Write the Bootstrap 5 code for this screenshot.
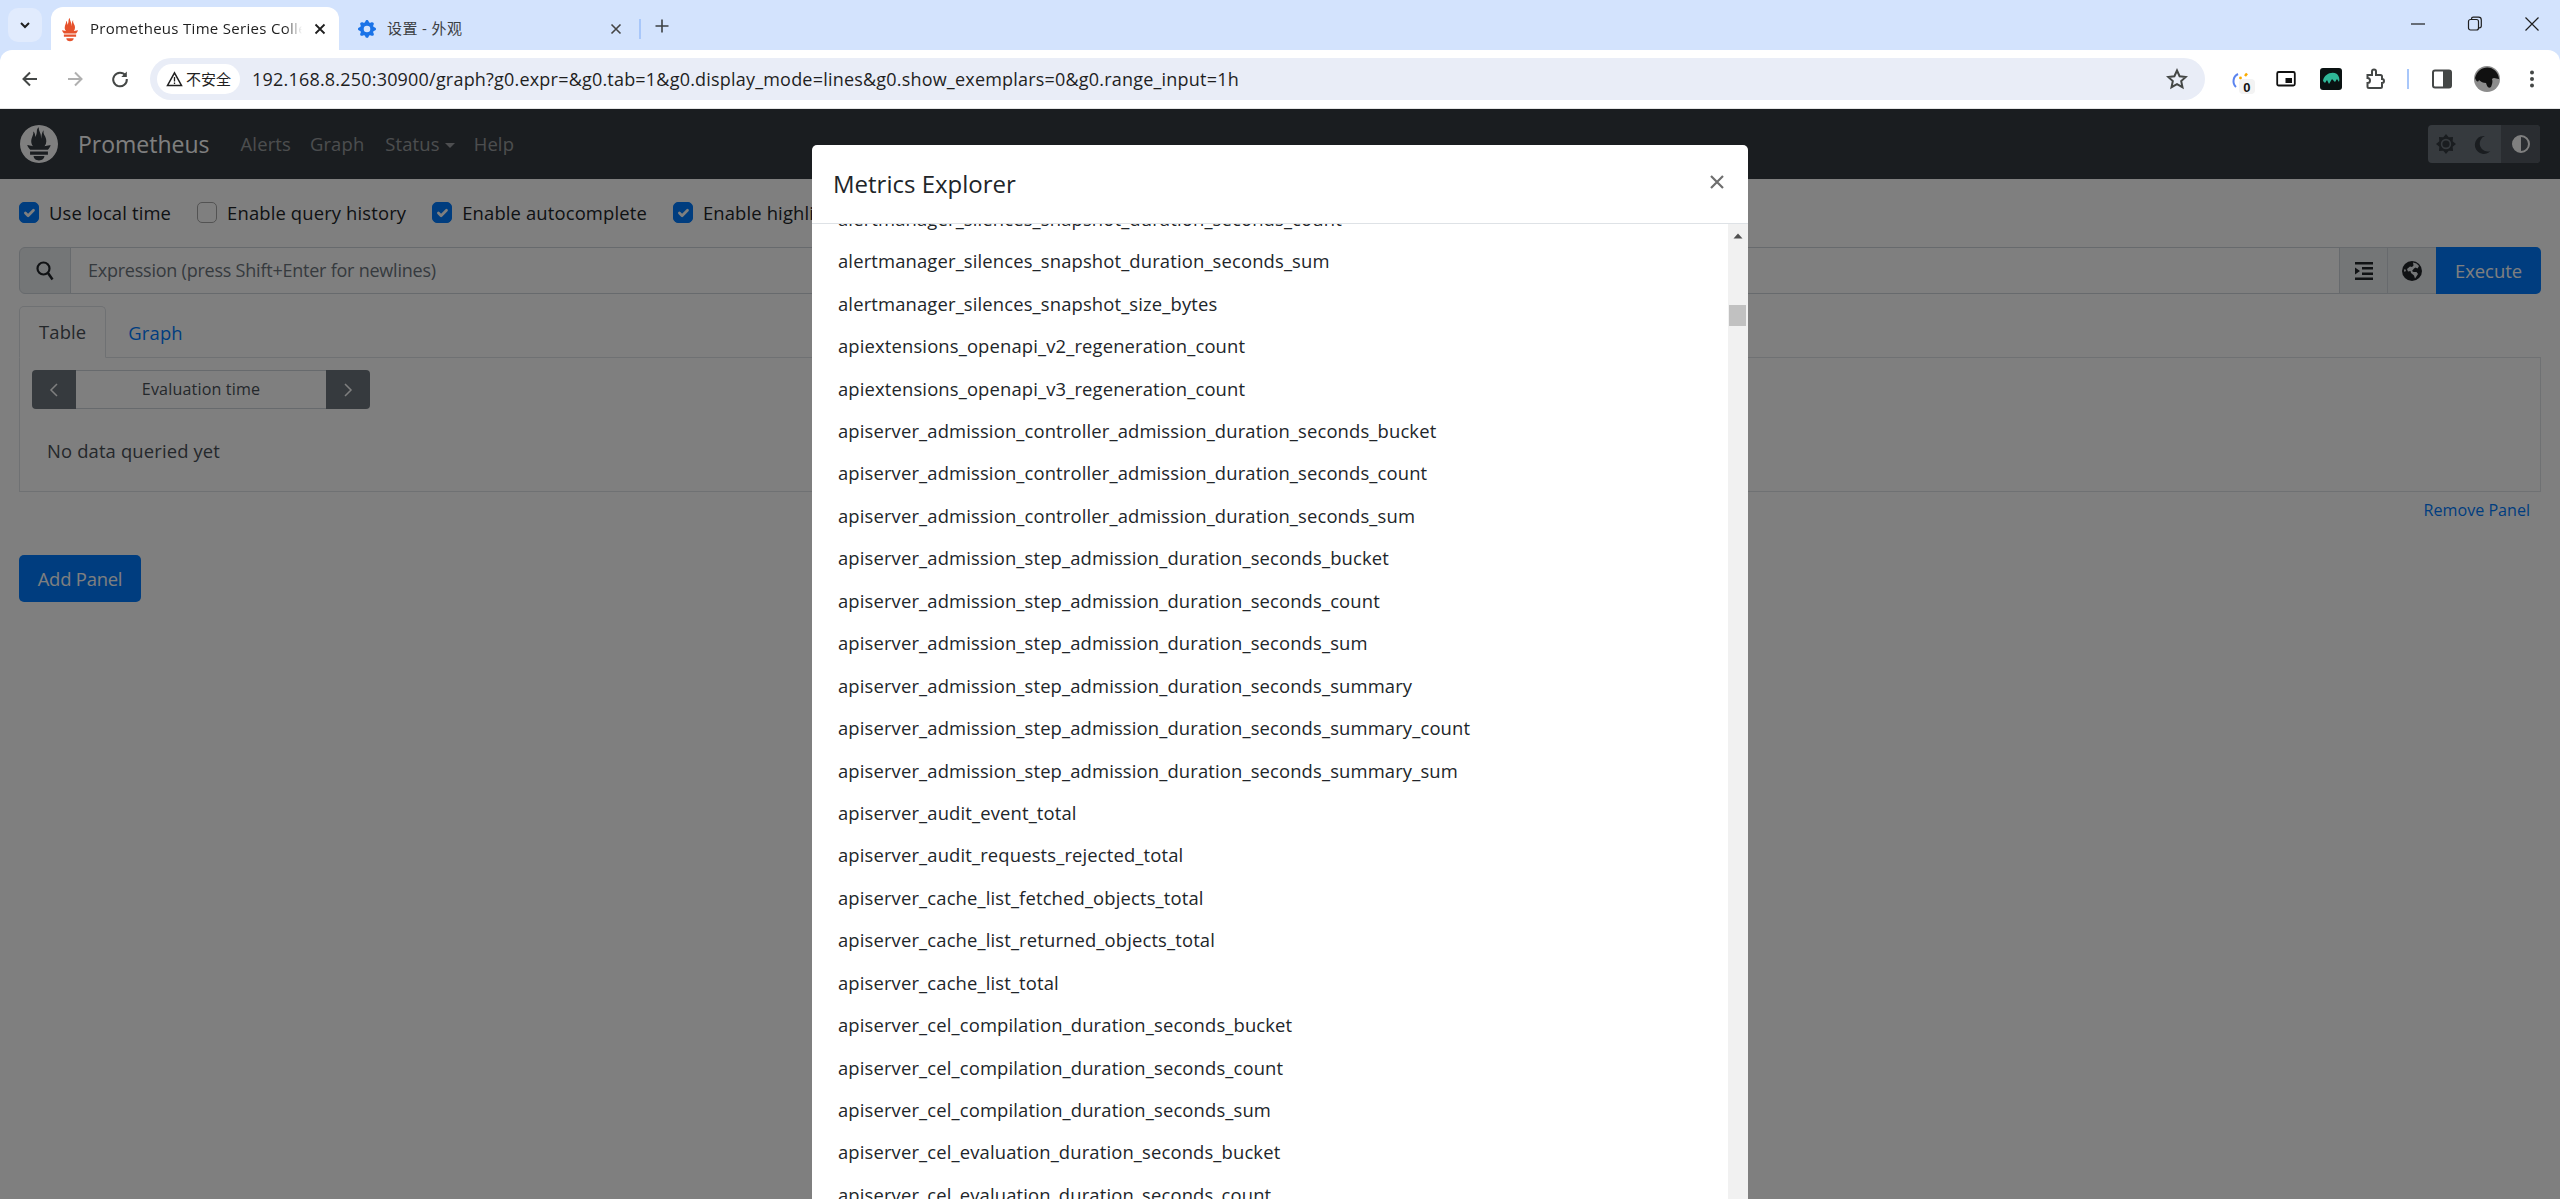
<!DOCTYPE html>
<html lang="en"><head><meta charset="utf-8"><title>Prometheus Time Series Collection and Processing Server</title>
<link rel="stylesheet" href="https://cdn.jsdelivr.net/npm/bootstrap@5.3.0/dist/css/bootstrap.min.css">
<style>
html,body{height:1199px;overflow:hidden}
body{font-family:"Open Sans","Noto Sans",sans-serif;color:#212529;font-size:18.4px;letter-spacing:.15px;background:#fff}
.cjk{font-family:"Open Sans","Noto Sans CJK SC",sans-serif}
.tabstrip{height:50px;background:#d3e3fd;flex:none}
.drop-tab{width:34px;height:34px;margin:8px 9px 0 8px;background:#e1ebfd;border-radius:10px;align-self:flex-start}
.tab-on{width:288px;height:43px;background:#fff;border-radius:12px 12px 0 0;padding:0 13px 0 9px;font-size:15px;letter-spacing:.3px;color:#1f1f1f}
.tab-off{width:300px;height:43px;padding:0 17px 0 19px;font-size:15px;color:#3c4043}
.tab-text{width:212px;white-space:nowrap;overflow:hidden;margin-left:10px;-webkit-mask-image:linear-gradient(90deg,#000 92%,transparent)}
.tabsep{width:2px;height:20px;background:#a8c7fa;margin:0 0 11px 0}
.plusbtn{margin:0 0 11px 13px}
.winbtns{gap:39px;padding-right:19px;align-self:flex-start;height:48px}
.toolbar{height:58px;background:#fff;border-radius:12px 12px 0 0;flex:none;padding:0 20px}
.toolwrap{background:#d3e3fd;flex:none}
.navbtns{gap:25px;width:130px;flex:none}
.omni{width:2055px;height:42px;background:#e9edf7;border-radius:21px;padding:0 17px 0 7px;color:#1f1f1f;flex:none}
.chip{width:83px;height:30px;background:#fff;border-radius:15px;font-size:15px;gap:3px;margin-right:12px;flex:none;justify-content:center}
.urltext{font-size:18px;letter-spacing:.2px;white-space:nowrap}
.exts{margin-left:13px;flex:none}
.ext{width:45px;display:flex;justify-content:center;position:relative}
.page-area{flex:1;min-height:0;border-top:1px solid #e4e4e4}
.pnav{height:70px;background:#343a40;padding:0 20px;flex:none}
.pbrand{font-size:23px;color:#fff;margin-left:20px;margin-right:31px;letter-spacing:0}
.plink{color:rgba(255,255,255,.5);margin-right:21px;text-decoration:none}
.plink.tight{margin-right:19px}
.caret{display:inline-block;border-top:.3em solid;border-left:.3em solid transparent;border-right:.3em solid transparent;margin-left:5px;vertical-align:.2em}
.themegrp{width:112px;height:38px;background:#6c757d;border-radius:4px;overflow:hidden}
.themegrp span{flex:1;display:flex;align-items:center;justify-content:center}
.themegrp .on{background:#545b62;flex:0 0 39px}
.pmain{padding:0 19px}
.optrow{margin-top:22px;height:24px;line-height:24px}
.optrow .form-check{padding-left:30px;margin:0 26px 0 0;min-height:0}
.optrow .form-check-input{width:20px;height:21px;margin:1px 0 0 -30px;border-radius:5px;border-color:#a6a6a6;float:left}
.form-check-input:checked{background-color:#007bff;border-color:#007bff}
.expr{margin-top:22px;height:47px;flex-wrap:nowrap}
.expr .input-group-text{background:#e9ecef;border-color:#ced4da;padding:0;justify-content:center}
.expr .form-control{border-color:#ced4da;border-radius:0;padding-left:17px;font-size:18px;letter-spacing:-.23px}
.expr .form-control::placeholder{color:#6c757d}
.btn-run{background:#007bff;color:#fff;border:0;width:105px;border-radius:0 5px 5px 0;font-size:18.4px;letter-spacing:0}
.ptabs{margin-top:12px;height:51px}
.ptabs .nav-link{height:52px;padding:0 19px;line-height:52px;color:#007bff;border-radius:5px 5px 0 0}
.ptabs .nav-link.active{color:#495057;background:#fff;border-color:#dee2e6 #dee2e6 #fff;line-height:50px}
.ptabs .nav-item+.nav-item .nav-link{padding:0 21px}
.pbody{height:135px;border:1px solid #dee2e6;padding:12px}
.evalgrp{width:338px;height:39px}
.evalbtn{width:44px;background:#6c757d;display:flex;align-items:center;justify-content:center;flex:none}
.evalbtn.l{border-radius:4px 0 0 4px}.evalbtn.r{border-radius:0 4px 4px 0}
.evalmid{flex:1;border-top:1px solid #ced4da;border-bottom:1px solid #ced4da;font-size:16.1px;color:#495057;text-align:center;line-height:37px}
.nodata{margin:30px 0 0 15px;color:#495057;line-height:24px}
.rmv{font-size:16.1px;letter-spacing:0;color:#007bff;text-decoration:none;margin:8px 11px 0 0;line-height:21px;display:block;text-align:right}
.addbtn{margin-top:34px;width:122px;height:47px;background:#007bff;border:0;border-radius:5px;color:#fff;font-size:18.4px;letter-spacing:-.2px;padding:0;display:block}
.dimmer{background:rgba(0,0,0,.5);inset:0;z-index:5}
.mshell{z-index:6;left:812px;top:36px;width:936px;height:1200px;border-radius:5px 5px 0 0;background:#fff;overflow:hidden}
.mhead{height:79px;border-bottom:1px solid #dee2e6;padding:0 24px 0 21px;flex:none}
.mtitle{font-size:24px;font-weight:400;letter-spacing:0;margin:0;color:#212529;line-height:36px}
.mbody{min-height:0;flex:1}
.mlist{flex:1;overflow:hidden}
.mlist .list-group{margin-top:-26.9px}
.mlist .list-group-item{border:0;padding:7.725px 0 7.725px 26px;line-height:27px;font-size:18.4px;color:#212529;background:transparent}
.sbar{width:20px;background:#f1f1f1;flex:none}
.sarrow{height:20px;display:flex;align-items:center;justify-content:center;padding-top:3px}
.sthumb{height:21px;background:#c1c1c1;margin:61px 2px 0 1px}
</style></head>
<body class="d-flex flex-column">

<div class="tabstrip d-flex align-items-end">
  <div class="drop-tab d-flex align-items-center justify-content-center">
    <svg width="12" height="12" viewBox="0 0 12 12"><path d="M2 4l4 4 4-4" fill="none" stroke="#1f1f1f" stroke-width="2"/></svg>
  </div>
  <div class="tab-on d-flex align-items-center">
    <svg width="20" height="26" viewBox="3 0 18 24"><path fill="#e6522c" d="M12 23.4c-1.885 0-3.414-1.26-3.414-2.814h6.828c0 1.553-1.528 2.813-3.414 2.813zM17.64 19.2H6.36v-2.046h11.28v2.046zM17.6 16.1H6.391c-.037-.043-.075-.086-.111-.13-1.155-1.401-1.427-2.133-1.69-2.879-.005-.025 1.4.287 2.395.511 0 0 .513.119 1.262.255-.72-.843-1.147-1.915-1.147-3.01 0-2.406 1.845-4.508 1.18-6.207.648.053 1.34 1.367 1.387 3.422.689-.951.977-2.69.977-3.755 0-1.103.727-2.385 1.454-2.429-.648 1.069.168 1.984.894 4.256.272.854.237 2.29.447 3.201.07-1.892.395-4.652 1.595-5.605-.529 1.2.079 2.702.494 3.424.671 1.164 1.078 2.047 1.078 3.716a4.642 4.642 0 01-1.11 2.996c.792-.149 1.34-.283 1.34-.283l2.573-.502s-.374 1.538-1.81 3.019z"/></svg>
    <span class="tab-text">Prometheus Time Series Collection and Processing Server</span>
    <svg class="ms-auto" width="12" height="12" viewBox="0 0 12 12"><path d="M1.5 1.5l9 9M10.500 1.5l-9 9" stroke="#1f1f1f" stroke-width="1.8"/></svg>
  </div>
  <div class="tab-off d-flex align-items-center">
    <svg width="18" height="18" viewBox="0 0 16 16"><path fill="#1a73e8" d="M9.405 1.05c-.413-1.4-2.397-1.4-2.81 0l-.1.34a1.464 1.464 0 0 1-2.105.872l-.31-.17c-1.283-.698-2.686.705-1.987 1.987l.169.311c.446.82.023 1.841-.872 2.105l-.34.1c-1.4.413-1.4 2.397 0 2.81l.34.1a1.464 1.464 0 0 1 .872 2.105l-.17.31c-.698 1.283.705 2.686 1.987 1.987l.311-.169a1.464 1.464 0 0 1 2.105.872l.1.34c.413 1.4 2.397 1.4 2.81 0l.1-.34a1.464 1.464 0 0 1 2.105-.872l.31.17c1.283.698 2.686-.705 1.987-1.987l-.169-.311a1.464 1.464 0 0 1 .872-2.105l.34-.1c1.4-.413 1.4-2.397 0-2.81l-.34-.1a1.464 1.464 0 0 1-.872-2.105l.17-.31c.698-1.283-.705-2.686-1.987-1.987l-.311.169a1.464 1.464 0 0 1-2.105-.872l-.1-.34zM8 10.93a2.929 2.929 0 1 1 0-5.86 2.929 2.929 0 0 1 0 5.858z"/></svg>
    <span class="cjk" style="letter-spacing:.4px;margin-left:11px">设置 - 外观</span>
    <svg class="ms-auto" width="12" height="12" viewBox="0 0 12 12"><path d="M1.5 1.5l9 9M10.500 1.5l-9 9" stroke="#444" stroke-width="1.6"/></svg>
  </div>
  <div class="tabsep"></div>
  <svg class="plusbtn" width="16" height="26" viewBox="0 0 16 16"><path d="M8 1.5v13M1.5 8h13" stroke="#3c4043" stroke-width="1.6"/></svg>
  <div class="winbtns d-flex align-items-center ms-auto">
    <svg width="18" height="18" viewBox="0 0 18 18"><path d="M2 9h14" stroke="#1f1f1f" stroke-width="1.2"/></svg>
    <svg width="18" height="18" viewBox="0 0 18 18"><rect x="2.500" y="4.500" width="10" height="10.500" rx="2" fill="none" stroke="#1f1f1f" stroke-width="1.2"/><path d="M5.500 4.500V4a1.800 1.800 0 0 1 1.800-1.800h5.200A2.800 2.800 0 0 1 15.300 5v6a1.800 1.800 0 0 1-1.800 1.800h-1" fill="none" stroke="#1f1f1f" stroke-width="1.2"/></svg>
    <svg width="18" height="18" viewBox="0 0 18 18"><path d="M2.500 2.500l13 13M15.500 2.500l-13 13" stroke="#1f1f1f" stroke-width="1.2"/></svg>
  </div>
</div>

<div class="toolwrap">
<div class="toolbar d-flex align-items-center">
  <div class="navbtns d-flex align-items-center">
    <svg width="20" height="20" viewBox="0 0 20 20"><path d="M17 10H4M10 3.500L3.500 10l6.500 6.500" fill="none" stroke="#444746" stroke-width="2"/></svg>
    <svg width="20" height="20" viewBox="0 0 20 20"><path d="M3 10h13M10 3.500l6.500 6.500-6.500 6.500" fill="none" stroke="#b0b0b0" stroke-width="2"/></svg>
    <svg width="20" height="20" viewBox="0 0 20 20"><path d="M15.500 6.500A6.800 6.800 0 1 0 16.800 10" fill="none" stroke="#444746" stroke-width="2"/><path d="M16.800 2.500v5.500h-5.500z" fill="#444746"/></svg>
  </div>
  <div class="omni d-flex align-items-center">
    <div class="chip d-flex align-items-center cjk">
      <svg width="17" height="16" viewBox="0 0 17 16"><path d="M8.500 1.800L15.500 14.500H1.500z" fill="none" stroke="#1f1f1f" stroke-width="1.500"/><path d="M8.500 6v4.500M8.500 11.500v1.500" stroke="#1f1f1f" stroke-width="1.300"/></svg>
      <span style="letter-spacing:0">不安全</span>
    </div>
    <span class="urltext">192.168.8.250:30900/graph?g0.expr=&amp;g0.tab=1&amp;g0.display_mode=lines&amp;g0.show_exemplars=0&amp;g0.range_input=1h</span>
    <svg class="ms-auto" width="22" height="22" viewBox="0 0 22 22"><path d="M11 2.500l2.600 5.700 6.200.7-4.600 4.200 1.300 6.100-5.500-3.100-5.500 3.100 1.300-6.100L2.200 8.900l6.200-.7z" fill="none" stroke="#444746" stroke-width="2"/></svg>
  </div>
  <div class="exts d-flex align-items-center">
    <span class="ext"><svg width="30" height="30" viewBox="0 0 30 30"><path d="M10 23a8 8 0 0 1 2-13" fill="none" stroke="#5b84ef" stroke-width="2"/><path d="M19 12l2-2.500" stroke="#f9ab00" stroke-width="2.500"/><circle cx="14.500" cy="14" r="1.400" fill="#f9ab00"/><rect x="13" y="15" width="16" height="15" rx="4" fill="#f3f3f3"/><text x="21" y="28" font-size="13" font-weight="700" text-anchor="middle" fill="#111" font-family="Liberation Sans">0</text></svg></span>
    <span class="ext"><svg width="20" height="18" viewBox="0 0 20 18"><rect x="1.200" y="2" width="17.600" height="13.500" rx="1.500" fill="none" stroke="#111" stroke-width="1.800"/><rect x="9.500" y="8" width="6.500" height="5" fill="#111"/></svg></span>
    <span class="ext"><svg width="22" height="22" viewBox="0 0 22 22"><rect width="22" height="22" rx="3" fill="#0a1212"/><path d="M3 13C4 6 12 3 17 6c2 2 3 5 2 8l-2-3-2 3-3-3-3 5-2-4-2 3z" fill="#2fb898"/></svg></span>
    <span class="ext"><svg width="22" height="22" viewBox="0 0 22 22"><path d="M2.500 7h4.500V3.500a2 2 0 0 1 4 0V7h4.500a1.500 1.500 0 0 1 1.500 1.500V11a2 2 0 0 1 0 4v3.500a1.500 1.500 0 0 1-1.500 1.500H4a1.500 1.500 0 0 1-1.500-1.500V15a2.500 2.500 0 0 0 0-5z" fill="none" stroke="#444746" stroke-width="2"/></svg></span>
    <span class="tabsep" style="margin:0 10px 0 9px;height:20px"></span>
    <span class="ext"><svg width="20" height="20" viewBox="0 0 20 20"><rect x="1" y="1.500" width="18" height="17" rx="2" fill="none" stroke="#444746" stroke-width="2"/><rect x="11" y="1.500" width="8" height="17" fill="#444746"/></svg></span>
    <span class="ext"><svg width="26" height="26" viewBox="0 0 26 26"><circle cx="13" cy="13" r="13" fill="#8c8c8c"/><path d="M1 12C3 4 10 0 17 2c5 2 8 7 8 11-3 0-5-2-7 0 1 3 0 5-1 8-3 2-4-1-5-4-3 0-5-1-7-3-1 3-3 1-4-2z" fill="#111"/></svg></span>
    <span class="ext"><svg width="6" height="20" viewBox="0 0 6 20"><circle cx="3" cy="3.500" r="2" fill="#444746"/><circle cx="3" cy="10" r="2" fill="#444746"/><circle cx="3" cy="16.500" r="2" fill="#444746"/></svg></span>
  </div>
</div></div>

<div class="page-area position-relative overflow-hidden">
  <nav class="pnav d-flex align-items-center">
    <svg width="38" height="38" viewBox="0 0 24 24"><path fill="#fff" d="M12 0C5.373 0 0 5.372 0 12c0 6.627 5.373 12 12 12s12-5.373 12-12c0-6.628-5.373-12-12-12zm0 22.460c-1.885 0-3.414-1.260-3.414-2.814h6.828c0 1.553-1.528 2.813-3.414 2.813zm5.640-3.745H6.360v-2.046h11.280v2.046zm-.04-3.098H6.391c-.037-.043-.075-.086-.111-.130-1.155-1.401-1.427-2.133-1.690-2.879-.005-.025 1.400.287 2.395.511 0 0 .513.119 1.262.255-.720-.843-1.147-1.915-1.147-3.010 0-2.406 1.845-4.508 1.180-6.207.648.053 1.340 1.367 1.387 3.422.689-.951.977-2.690.977-3.755 0-1.103.727-2.385 1.454-2.429-.648 1.069.168 1.984.894 4.256.272.854.237 2.290.447 3.201.070-1.892.395-4.652 1.595-5.605-.529 1.200.079 2.702.494 3.424.671 1.164 1.078 2.047 1.078 3.716a4.642 4.642 0 01-1.110 2.996c.792-.149 1.340-.283 1.340-.283l2.573-.502s-.374 1.538-1.810 3.019z"/></svg>
    <span class="pbrand">Prometheus</span>
    <a class="plink tight" href="#">Alerts</a><a class="plink" href="#">Graph</a><a class="plink tight" href="#">Status<span class="caret"></span></a><a class="plink" href="#">Help</a>
    <div class="themegrp d-flex ms-auto">
      <span><svg width="20" height="20" viewBox="0 0 20 20"><path fill="#343a40" fill-rule="evenodd" d="M10 0L12.760 3.350 17.070 2.930 16.650 7.240 20 10 16.650 12.760 17.070 17.070 12.760 16.650 10 20 7.240 16.650 2.930 17.070 3.350 12.760 0 10 3.350 7.240 2.930 2.930 7.240 3.350zM10 4.800a5.200 5.200 0 1 0 0 10.400 5.200 5.200 0 0 0 0-10.400z"/><circle cx="10" cy="10" r="3.600" fill="#343a40"/></svg></span>
      <span><svg width="17" height="19" viewBox="0 0 17 19"><path fill="#343a40" d="M11 1A9 9 0 1 0 16.500 16 7.500 7.500 0 0 1 11 1z"/></svg></span>
      <span class="on"><svg width="18" height="18" viewBox="0 0 18 18"><circle cx="9" cy="9" r="8" fill="none" stroke="#fff" stroke-width="2"/><path d="M9 1a8 8 0 0 0 0 16z" fill="#fff"/></svg></span>
    </div>
  </nav>

  <main class="pmain">
    <div class="optrow d-flex">
      <div class="form-check"><input class="form-check-input" type="checkbox" checked><label class="form-check-label">Use local time</label></div>
      <div class="form-check"><input class="form-check-input" type="checkbox"><label class="form-check-label">Enable query history</label></div>
      <div class="form-check"><input class="form-check-input" type="checkbox" checked><label class="form-check-label">Enable autocomplete</label></div>
      <div class="form-check"><input class="form-check-input" type="checkbox" checked><label class="form-check-label">Enable highlighting</label></div>
    </div>
    <div class="input-group expr">
      <span class="input-group-text" style="width:52px"><svg width="18" height="20" viewBox="0 0 18 20"><circle cx="7.500" cy="7.500" r="6" fill="none" stroke="#212529" stroke-width="2.200"/><path d="M12 12l4.500 6.500" stroke="#212529" stroke-width="2.500"/></svg></span>
      <input class="form-control" placeholder="Expression (press Shift+Enter for newlines)">
      <span class="input-group-text" style="width:49px"><svg width="18" height="18" viewBox="0 0 18 18"><path fill="#212529" d="M0 0h18v2.500H0zM7 5h11v2.500H7zM7 10.500h11V13H7zM0 15.500h18V18H0zM0 5.500L5 9l-5 3.500z"/></svg></span>
      <span class="input-group-text" style="width:50px"><svg width="20" height="20" viewBox="0 0 20 20"><circle cx="10" cy="10" r="10" fill="#212529"/><path fill="#e9ecef" d="M11 1.500c2.500.3 4.500 1.500 6 3.500l-1.500 2.500-2-1-1.500 1-2 2.500 1.500 1h3l1.500 2-3 4.500-1-3-3-2.500-.5-2-2.500.5L5 8l3-2.500 2 .5 1.500-1.500zM2.500 8l1.500 1-1 2-1-1z"/></svg></span>
      <button class="btn-run">Execute</button>
    </div>
    <ul class="nav nav-tabs ptabs border-0">
      <li class="nav-item"><a class="nav-link active" href="#">Table</a></li>
      <li class="nav-item"><a class="nav-link" href="#">Graph</a></li>
    </ul>
    <div class="pbody">
      <div class="evalgrp d-flex">
        <span class="evalbtn l"><svg width="10" height="16" viewBox="0 0 10 16"><path d="M8 2L2 8l6 6" fill="none" stroke="#fff" stroke-width="1.500"/></svg></span>
        <div class="evalmid">Evaluation time</div>
        <span class="evalbtn r"><svg width="10" height="16" viewBox="0 0 10 16"><path d="M2 2l6 6-6 6" fill="none" stroke="#fff" stroke-width="1.500"/></svg></span>
      </div>
      <div class="nodata">No data queried yet</div>
    </div>
    <a class="rmv" href="#">Remove Panel</a>
    <button class="addbtn">Add Panel</button>
  </main>

  <div class="dimmer position-absolute"></div>
  <div class="mshell position-absolute d-flex flex-column">
    <div class="mhead d-flex align-items-center justify-content-between">
      <h5 class="mtitle">Metrics Explorer</h5>
      <svg width="14" height="14" viewBox="0 0 14 14" class="mb-1"><path d="M1 1l12 12M13 1L1 13" stroke="#6e6e6e" stroke-width="2.200"/></svg>
    </div>
    <div class="mbody d-flex">
      <div class="mlist">
        <ul class="list-group list-group-flush">
          <li class="list-group-item">alertmanager_silences_snapshot_duration_seconds_count</li>
          <li class="list-group-item">alertmanager_silences_snapshot_duration_seconds_sum</li>
          <li class="list-group-item">alertmanager_silences_snapshot_size_bytes</li>
          <li class="list-group-item">apiextensions_openapi_v2_regeneration_count</li>
          <li class="list-group-item">apiextensions_openapi_v3_regeneration_count</li>
          <li class="list-group-item">apiserver_admission_controller_admission_duration_seconds_bucket</li>
          <li class="list-group-item">apiserver_admission_controller_admission_duration_seconds_count</li>
          <li class="list-group-item">apiserver_admission_controller_admission_duration_seconds_sum</li>
          <li class="list-group-item">apiserver_admission_step_admission_duration_seconds_bucket</li>
          <li class="list-group-item">apiserver_admission_step_admission_duration_seconds_count</li>
          <li class="list-group-item">apiserver_admission_step_admission_duration_seconds_sum</li>
          <li class="list-group-item">apiserver_admission_step_admission_duration_seconds_summary</li>
          <li class="list-group-item">apiserver_admission_step_admission_duration_seconds_summary_count</li>
          <li class="list-group-item">apiserver_admission_step_admission_duration_seconds_summary_sum</li>
          <li class="list-group-item">apiserver_audit_event_total</li>
          <li class="list-group-item">apiserver_audit_requests_rejected_total</li>
          <li class="list-group-item">apiserver_cache_list_fetched_objects_total</li>
          <li class="list-group-item">apiserver_cache_list_returned_objects_total</li>
          <li class="list-group-item">apiserver_cache_list_total</li>
          <li class="list-group-item">apiserver_cel_compilation_duration_seconds_bucket</li>
          <li class="list-group-item">apiserver_cel_compilation_duration_seconds_count</li>
          <li class="list-group-item">apiserver_cel_compilation_duration_seconds_sum</li>
          <li class="list-group-item">apiserver_cel_evaluation_duration_seconds_bucket</li>
          <li class="list-group-item">apiserver_cel_evaluation_duration_seconds_count</li>
        </ul>
      </div>
      <div class="sbar">
        <div class="sarrow"><svg width="10" height="6" viewBox="0 0 10 6"><path d="M5 .5L9.500 5.500H.5z" fill="#505050"/></svg></div>
        <div class="sthumb"></div>
      </div>
    </div>
  </div>
</div>
</body></html>
